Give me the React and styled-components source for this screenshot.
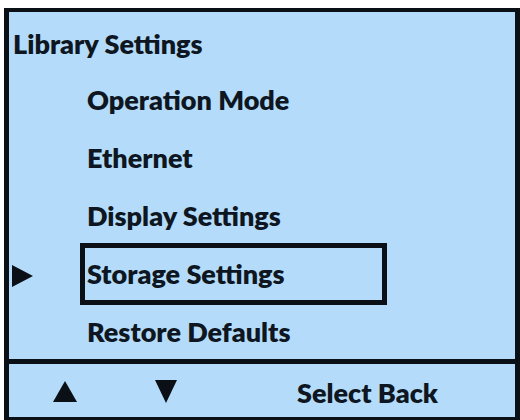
import styled, { createGlobalStyle } from 'styled-components'

/*---> Global <---*/
const GlobalStyle = createGlobalStyle`
  body {
    margin: 0;
    background: #ffffff;
    font-family: Lato, "Open Sans", "DejaVu Sans", sans-serif;
  }
`

const items = [
  'Operation Mode',
  'Ethernet',
  'Display Settings',
  'Storage Settings',
  'Restore Defaults',
]

const Triangle = ({ dir, w, h }) => {
  const points = {
    right: `0,0 ${w},${h / 2} 0,${h}`,
    up: `${w / 2},0 ${w},${h} 0,${h}`,
    down: `0,0 ${w},0 ${w / 2},${h}`,
  }[dir]
  return (
    <svg width={w} height={h} viewBox={`0 0 ${w} ${h}`}>
      <polygon points={points} fill="#0b0f16" />
    </svg>
  )
}

/*---> Component <---*/
const App = () => {
  const selected = 3

  return (
    <>
      <GlobalStyle />
      <Frame>
        <Menu>
          <Title>Library Settings</Title>
          {items.map((label, i) => (
            <Row key={label}>
              <Pointer>
                {i === selected && <Triangle dir="right" w={21} h={22} />}
              </Pointer>
              <Label $active={i === selected}>{label}</Label>
            </Row>
          ))}
        </Menu>
        <Footer>
          <Key $width={102}>
            <Triangle dir="up" w={24} h={21} />
          </Key>
          <Key $width={142}>
            <Triangle dir="down" w={22} h={23} />
          </Key>
          <Softkeys>Select Back</Softkeys>
        </Footer>
      </Frame>
    </>
  )
}

export default App

/*---> Styles <---*/
const Frame = styled.div`
  box-sizing: border-box;
  margin: 8px 0 0 4px;
  width: 516px;
  height: 413px;
  border: 4px solid #0b0f16;
  border-left-width: 5px;
  border-right-width: 5px;
  background: #b4dcfa;
  color: #0e1621;
  display: flex;
  flex-direction: column;
`

const Menu = styled.div`
  flex: 1;
  overflow: hidden;
  padding-top: 3px;
  display: flex;
  flex-direction: column;
`

const Title = styled.div`
  height: 58px;
  flex-shrink: 0;
  line-height: 58px;
  padding-left: 4px;
  font-size: 27px;
  font-weight: 800;
`

const Row = styled.div`
  height: 58px;
  flex-shrink: 0;
  display: flex;
  align-items: center;
`

const Pointer = styled.div`
  width: 68px;
  padding-left: 3px;
  display: flex;
  align-items: center;
`

const Label = styled.div`
  box-sizing: border-box;
  width: 307px;
  height: 62px;
  margin-top: -4px;
  flex-shrink: 0;
  padding-left: 2px;
  border: 5px solid ${(props) => (props.$active ? '#0b0f16' : 'transparent')};
  line-height: 52px;
  font-size: 27px;
  font-weight: 800;
  white-space: nowrap;
`

const Footer = styled.div`
  height: 53px;
  flex-shrink: 0;
  border-top: 5px solid #0b0f16;
  display: flex;
  align-items: center;
  padding-left: 44px;
`

const Key = styled.div`
  width: ${(props) => props.$width}px;
  display: flex;
  align-items: center;
  padding-top: 2px;
`

const Softkeys = styled.div`
  font-size: 27px;
  font-weight: 800;
  line-height: 53px;
  padding-top: 4px;
  white-space: nowrap;
`
